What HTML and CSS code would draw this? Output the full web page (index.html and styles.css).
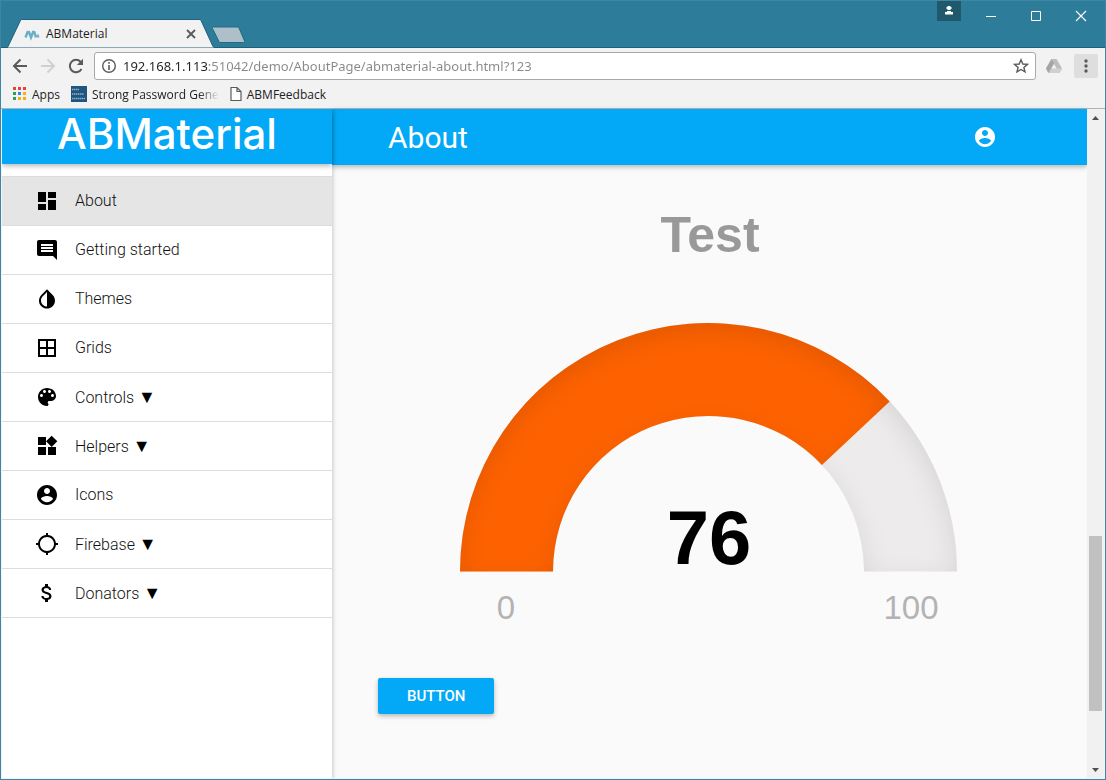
FILE: index.html
```html
<!DOCTYPE html>
<html lang="en">
<head>
<meta charset="utf-8">
<title>ABMaterial</title>
<link rel="stylesheet" href="styles.css">
</head>
<body>
<div class="window">
  <header class="titlebar">
    <div class="tab">
      <svg class="tab-shape" viewBox="0 0 208 30" preserveAspectRatio="none" aria-hidden="true">
        <path d="M0 30 L1 28.500 L13.500 1.500 Q14 .5 15 .5 H192 Q193.500 .5 194 1.500 L206 28.500 L208 30 Z" fill="#f2f2f2" stroke="#1e5f7a"/>
      </svg>
      <svg class="favicon" viewBox="0 0 16 16" aria-hidden="true">
        <path d="M1.500 11.500 L4 5 M4.500 5 L7 11.500 L9.500 5 M10 5 L12 11.500" fill="none" stroke="#69adc6" stroke-width="2.400"/>
        <path d="M13.500 8.500 L14.500 11.500" stroke="#69adc6" stroke-width="2"/>
      </svg>
      <span class="tab-title">ABMaterial</span>
      <button class="tab-close" aria-label="Close tab"><svg width="10" height="10" viewBox="0 0 10 10"><path d="M1 1 L9 9 M9 1 L1 9" stroke="#5a5a5a" stroke-width="1.800"/></svg></button>
    </div>
    <button class="new-tab" aria-label="New tab"><svg width="36" height="18" viewBox="0 0 36 18"><path d="M2.500 1 H26 Q27.500 1 28 2 L33.500 15 Q34 16.500 32.500 16.500 H10 Q8.500 16.500 8 15.500 L1.500 2.500 Q1 1 2.500 1Z" fill="#adc0c9" stroke="#256a84"/></svg></button>
    <div class="controls">
      <button class="profile" aria-label="Profile"><svg width="12" height="12" viewBox="0 0 12 12" fill="#fff"><path d="M4.500 1 H7.500 V2 H8.500 V4 H7.500 V5 H4.500 V4 H3.500 V2 H4.500Z M4 6 H8 V7 H10 V9.500 H2 V7 H4Z"/></svg></button>
      <button class="control" aria-label="Minimize"><svg width="12" height="12" viewBox="0 0 12 12"><path d="M1 6.500 H11" stroke="#fff"/></svg></button>
      <button class="control" aria-label="Maximize"><svg width="12" height="12" viewBox="0 0 12 12"><path d="M1.500 1.500 H10.500 V10.500 H1.500Z" fill="none" stroke="#fff"/></svg></button>
      <button class="control" aria-label="Close"><svg width="12" height="12" viewBox="0 0 12 12"><path d="M1 1 L11 11 M11 1 L1 11" stroke="#fff" stroke-width="1.200"/></svg></button>
    </div>
  </header>

  <div class="toolbar">
    <button class="tool" aria-label="Back"><svg viewBox="0 0 16 16"><path d="M15 8 H2.500 M8.500 1.500 L2 8 L8.500 14.500" fill="none" stroke="#5a5a5a" stroke-width="2"/></svg></button>
    <button class="tool" aria-label="Forward"><svg viewBox="0 0 16 16"><path d="M1 8 H13.500 M7.500 1.500 L14 8 L7.500 14.500" fill="none" stroke="#d0d0d0" stroke-width="2"/></svg></button>
    <button class="tool" aria-label="Reload"><svg viewBox="0 0 16 16"><path d="M13.500 11 A6.200 6.200 0 1 1 12.700 3.900" fill="none" stroke="#5a5a5a" stroke-width="2"/><path d="M15 .8 V7 H8.800Z" fill="#5a5a5a"/></svg></button>
    <div class="omnibox">
      <svg width="16" height="16" viewBox="0 0 16 16" aria-hidden="true"><circle cx="8" cy="8" r="6.300" fill="none" stroke="#5a5a5a" stroke-width="1.400"/><path d="M8 7 V12 M8 4 V5.700" stroke="#5a5a5a" stroke-width="1.600"/></svg>
      <input class="url" type="text" aria-label="Address" value="192.168.1.113:51042/demo/AboutPage/abmaterial-about.html?123">
      <button class="star" aria-label="Bookmark this page"><svg width="16" height="16" viewBox="0 0 16 16"><path d="M8 1.800 L9.800 6 L14.400 6.400 L10.900 9.400 L12 13.900 L8 11.500 L4 13.900 L5.100 9.400 L1.600 6.400 L6.200 6Z" fill="none" stroke="#5a5a5a" stroke-width="1.400"/></svg></button>
    </div>
    <button class="drive" aria-label="Drive"><svg width="16" height="16" viewBox="0 0 16 16"><path d="M5.500 1 H10.500 L16 10.500 L13.500 15 H2.500 L0 10.500Z" fill="#bdbdbd"/><path d="M5.500 1 L8 5.500 L2.500 15 L0 10.500Z" fill="#a5a5a5"/><path d="M5.300 10.500 H16 L13.500 15 H2.500Z" fill="#d0d0d0"/><path d="M8 6 L10.700 10.500 H5.300Z" fill="#f2f2f2"/></svg></button>
    <button class="more" aria-label="Menu"><svg width="16" height="16" viewBox="0 0 16 16" fill="#5a5a5a"><circle cx="8" cy="3" r="1.700"/><circle cx="8" cy="8" r="1.700"/><circle cx="8" cy="13" r="1.700"/></svg></button>
  </div>

  <nav class="bookmarks" aria-label="Bookmarks">
    <a class="bookmark" href="#apps"><svg width="14" height="14" viewBox="0 0 14 14"><path d="M0 0h3v3H0zM5 0h3v3H5zM10 0h3v3h-3z" fill="#ea4335"/><path d="M0 5h3v3H0z" fill="#2ca05a"/><path d="M5 5h3v3H5z" fill="#2b8af0"/><path d="M10 5h3v3h-3z" fill="#f9b10a"/><path d="M0 10h3v3H0z" fill="#2ca05a"/><path d="M5 10h3v3H5zM10 10h3v3h-3z" fill="#f9b10a"/></svg><span>Apps</span></a>
    <a class="bookmark" href="#password"><svg width="16" height="16" viewBox="0 0 16 16"><path d="M0 0h16v16H0z" fill="#1f557e"/><path d="M1 3.500h7M1 8h12M1 12.500h13" stroke="#8fb0c8" stroke-width="1.500" stroke-dasharray="1.500 .5"/></svg><span class="faded">Strong Password Gene</span></a>
    <a class="bookmark" href="#feedback"><svg width="12" height="16" viewBox="0 0 12 16"><path d="M1 1.500 H7 L11 5.500 V14.500 H1Z M7 1.500 V5.500 H11" fill="#fff" stroke="#5a5a5a" stroke-width="1.200"/></svg><span>ABMFeedback</span></a>
  </nav>

  <div class="page">
    <aside class="sidebar">
      <div class="brand">ABMaterial</div>
      <ul class="menu">
        <li><a class="item active" href="#about"><svg viewBox="0 0 24 24"><path d="M3 13h8V3H3v10zm0 8h8v-6H3v6zm10 0h8V11h-8v10zm0-18v6h8V3h-8z"/></svg>About</a></li>
        <li><a class="item" href="#start"><svg viewBox="0 0 24 24"><path d="M21.990 4c0-1.100-.89-2-1.990-2H4c-1.100 0-2 .9-2 2v12c0 1.100.9 2 2 2h14l4 4-.01-18zM18 14H6v-2h12v2zm0-3H6V9h12v2zm0-3H6V6h12v2z"/></svg>Getting started</a></li>
        <li><a class="item" href="#themes"><svg viewBox="0 0 24 24"><path d="M17.660 7.930L12 2.270 6.340 7.930c-3.120 3.120-3.120 8.190 0 11.310C7.900 20.800 9.950 21.580 12 21.580c2.050 0 4.100-.78 5.660-2.340 3.120-3.120 3.120-8.190 0-11.310zM12 19.590c-1.600 0-3.110-.62-4.240-1.760C6.620 16.690 6 15.190 6 13.590s.62-3.110 1.760-4.240L12 5.100v14.490z"/></svg>Themes</a></li>
        <li><a class="item" href="#grids"><svg viewBox="0 0 24 24"><path d="M3 3v18h18V3H3zm8 16H5v-6h6v6zm0-8H5V5h6v6zm8 8h-6v-6h6v6zm0-8h-6V5h6v6z"/></svg>Grids</a></li>
        <li><a class="item" href="#controls"><svg viewBox="0 0 24 24"><path d="M12 3c-4.970 0-9 4.030-9 9s4.030 9 9 9c.83 0 1.500-.67 1.500-1.500 0-.39-.15-.74-.39-1.010-.23-.26-.38-.61-.38-.99 0-.83.67-1.500 1.500-1.500H16c2.760 0 5-2.240 5-5 0-4.420-4.030-8-9-8zm-5.500 9c-.83 0-1.500-.67-1.500-1.500S5.670 9 6.500 9 8 9.670 8 10.500 7.330 12 6.500 12zm3-4C8.670 8 8 7.330 8 6.500S8.670 5 9.500 5s1.500.67 1.500 1.500S10.330 8 9.500 8zm5 0c-.83 0-1.500-.67-1.500-1.500S13.670 5 14.500 5s1.500.67 1.500 1.500S15.330 8 14.500 8zm3 4c-.83 0-1.500-.67-1.500-1.500S16.670 9 17.500 9s1.500.67 1.500 1.500-.67 1.500-1.500 1.500z"/></svg><span>Controls <span class="caret">▼</span></span></a></li>
        <li><a class="item" href="#helpers"><svg viewBox="0 0 24 24"><path d="M13 13v8h8v-8h-8zM3 21h8v-8H3v8zM3 3v8h8V3H3zm13.660-1.310L11 7.340 16.660 13l5.660-5.660-5.660-5.650z"/></svg><span>Helpers <span class="caret">▼</span></span></a></li>
        <li><a class="item" href="#icons"><svg viewBox="0 0 24 24"><path d="M12 2C6.480 2 2 6.480 2 12s4.480 10 10 10 10-4.480 10-10S17.520 2 12 2zm0 3c1.660 0 3 1.340 3 3s-1.340 3-3 3-3-1.340-3-3 1.340-3 3-3zm0 14.200c-2.500 0-4.710-1.280-6-3.220.03-1.990 4-3.080 6-3.080 1.990 0 5.970 1.090 6 3.080-1.290 1.940-3.500 3.220-6 3.220z"/></svg>Icons</a></li>
        <li><a class="item" href="#firebase"><svg viewBox="0 0 24 24"><path d="M20.940 11c-.46-4.170-3.770-7.480-7.940-7.940V1h-2v2.060C6.830 3.520 3.520 6.830 3.060 11H1v2h2.060c.46 4.170 3.770 7.480 7.940 7.940V23h2v-2.060c4.170-.46 7.480-3.770 7.940-7.940H23v-2h-2.060zM12 19c-3.870 0-7-3.130-7-7s3.130-7 7-7 7 3.130 7 7-3.130 7-7 7z"/></svg><span>Firebase <span class="caret">▼</span></span></a></li>
        <li><a class="item" href="#donators"><svg viewBox="0 0 24 24"><path d="M11.800 10.900c-2.270-.59-3-1.200-3-2.150 0-1.090 1.010-1.850 2.700-1.850 1.780 0 2.440.85 2.500 2.100h2.210c-.07-1.720-1.120-3.300-3.210-3.810V3h-3v2.160c-1.940.42-3.500 1.680-3.500 3.610 0 2.310 1.910 3.460 4.700 4.130 2.500.6 3 1.480 3 2.410 0 .69-.49 1.790-2.700 1.790-2.060 0-2.870-.92-2.980-2.100h-2.200c.12 2.190 1.760 3.420 3.680 3.830V21h3v-2.150c1.950-.37 3.500-1.500 3.500-3.550 0-2.840-2.430-3.810-4.700-4.400z"/></svg><span>Donators <span class="caret">▼</span></span></a></li>
      </ul>
    </aside>

    <main class="main">
      <div class="navbar">
        <h1>About</h1>
        <button class="account" aria-label="Account"><svg width="24" height="24" viewBox="0 0 24 24" fill="#fff"><path d="M12 2C6.480 2 2 6.480 2 12s4.480 10 10 10 10-4.480 10-10S17.520 2 12 2zm0 3c1.660 0 3 1.340 3 3s-1.340 3-3 3-3-1.340-3-3 1.340-3 3-3zm0 14.200c-2.500 0-4.710-1.280-6-3.220.03-1.990 4-3.080 6-3.080 1.990 0 5.970 1.090 6 3.080-1.290 1.940-3.500 3.220-6 3.220z"/></svg></button>
      </div>
      <div class="content">
        <svg class="gauge" viewBox="0 0 664 493" role="img" aria-label="Test gauge, 76 of 100">
          <defs>
            <filter id="inner-shadow" x="-10%" y="-10%" width="120%" height="120%" color-interpolation-filters="sRGB">
              <feOffset dx="0" dy="8"/>
              <feGaussianBlur result="blurred" stdDeviation="13"/>
              <feComposite operator="out" in="SourceGraphic" in2="blurred" result="inverse"/>
              <feFlood flood-color="#000" flood-opacity=".1" result="color"/>
              <feComposite operator="in" in="color" in2="inverse" result="shadow"/>
              <feComposite operator="over" in="shadow" in2="SourceGraphic"/>
            </filter>
          </defs>
          <path d="M82 386.500 A248.500 248.500 0 0 1 579 386.500 H486 A155.500 155.500 0 0 0 175 386.500Z" fill="#edebeb" filter="url(#inner-shadow)"/>
          <path d="M82 386.500 A248.500 248.500 0 0 1 511.600 216.400 L443.900 280 A155.500 155.500 0 0 0 175 386.500Z" fill="#fe6200" filter="url(#inner-shadow)"/>
          <text class="gauge-title" x="332" y="67">Test</text>
          <text class="gauge-value" x="331" y="379">76</text>
          <text class="gauge-limit" x="128" y="434">0</text>
          <text class="gauge-limit" x="533" y="434">100</text>
        </svg>
        <button class="action">BUTTON</button>
      </div>
    </main>

    <div class="scrollbar">
      <button class="scroll-arrow" aria-label="Scroll up"><svg width="7" height="4" viewBox="0 0 7 4"><path d="M0 4 L3.500 0 L7 4Z" fill="#505050"/></svg></button>
      <div class="scroll-track"><div class="scroll-before"></div><div class="scroll-thumb"></div><div class="scroll-after"></div></div>
      <button class="scroll-arrow" aria-label="Scroll down"><svg width="7" height="4" viewBox="0 0 7 4"><path d="M0 0 L3.500 4 L7 0Z" fill="#505050"/></svg></button>
    </div>
  </div>
</div>
</body>
</html>
```
FILE: styles.css
```css
* { box-sizing: border-box; }

body {
  margin: 0;
  font-family: "Open Sans", "Noto Sans", sans-serif;
  font-size: 12px;
  color: #222;
}

button {
  display: flex;
  align-items: center;
  justify-content: center;
  padding: 0;
  border: 0;
  background: none;
  font: inherit;
}

a { color: inherit; text-decoration: none; }

svg { display: block; flex: none; }

.window {
  display: flex;
  flex-direction: column;
  min-height: 100vh;
  border: 1px solid #3d86a5;
  background: #f2f2f2;
}

/* Title bar */
.titlebar {
  display: flex;
  align-items: flex-end;
  height: 47px;
  padding-left: 6px;
  background: #2d7c9a;
  box-shadow: inset 0 -1px #1e5f7a;
}

.tab {
  position: relative;
  display: flex;
  align-items: center;
  width: 208px;
  height: 29px;
  padding: 0 16px 0 17px;
}

.tab-shape {
  position: absolute;
  inset: 0;
  width: 100%;
  height: 100%;
}

.favicon { position: relative; width: 16px; height: 16px; }

.tab-title { position: relative; flex: 1; padding-left: 6px; color: #222; font-size: 12px; }

.tab-close { position: relative; width: 16px; height: 16px; }

.new-tab { align-self: flex-end; margin-bottom: 4px; margin-left: -4px; }

.controls {
  display: flex;
  align-items: flex-start;
  align-self: flex-start;
  margin-left: auto;
  padding-right: 2px;
}

.profile { width: 24px; height: 20px; margin-right: 7px; background: #20586c; }

.control { width: 45px; height: 29px; }

/* Toolbar */
.toolbar {
  display: flex;
  align-items: center;
  gap: 8px;
  height: 36px;
  padding: 0 7px 0 9px;
}

.tool { width: 20px; height: 20px; }

.tool svg { width: 16px; height: 16px; }

.omnibox {
  display: flex;
  flex: 1;
  align-items: center;
  gap: 4px;
  height: 28px;
  padding: 0 6px;
  border: 1px solid #a9a9a9;
  border-radius: 3px;
  background: #fff;
}

.url {
  flex: 1;
  min-width: 0;
  padding: 0 2px;
  border: 0;
  background: linear-gradient(90deg, #222 86px, #888 86px) text;
  color: transparent;
  font-family: "Noto Sans", "Open Sans", sans-serif;
  font-size: 13px;
}

.drive { margin-left: 2px; width: 16px; height: 16px; }

.more {
  width: 24px;
  height: 24px;
  margin-left: 4px;
  border-radius: 2px;
  background: #dedede;
}

/* Bookmarks */
.bookmarks {
  display: flex;
  align-items: center;
  gap: 11px;
  height: 24px;
  padding: 0 12px 4px;
  box-shadow: 0 1px #b2b2b2;
}

.bookmark { display: flex; align-items: center; gap: 5px; white-space: nowrap; }

.faded {
  -webkit-mask-image: linear-gradient(90deg, #000 84%, transparent);
  mask-image: linear-gradient(90deg, #000 84%, transparent);
}

/* Page */
.page {
  display: flex;
  flex: 1;
  margin: 1px;
  font-family: Roboto, sans-serif;
}

.sidebar {
  position: relative;
  width: 330px;
  background: #fff;
  box-shadow: 0 2px 5px rgba(0, 0, 0, .28);
  clip-path: inset(0 -10px 0 0);
}

.brand {
  height: 55px;
  background: #03a9f7;
  box-shadow: 0 2px 5px rgba(0, 0, 0, .28);
  color: #fff;
  font-family: Inter, sans-serif;
  font-size: 42px;
  font-weight: 500;
  line-height: 50px;
  text-align: center;
}

.menu {
  margin: 12px 0 0;
  padding: 0;
  border-top: 1px solid #ddd;
  list-style: none;
}

.item {
  display: flex;
  align-items: center;
  gap: 16px;
  height: 49px;
  padding-left: 33px;
  border-bottom: 1px solid #ddd;
  color: #111;
  font-size: 16px;
  font-weight: 300;
  line-height: 20px;
}

.item.active { background: #e5e5e5; }

.item svg { width: 24px; height: 24px; fill: #000; }

.caret { color: #000; font-family: "DejaVu Sans", sans-serif; font-size: 18px; }

.main { flex: 1; min-width: 0; background: #fafafa; }

.navbar {
  display: flex;
  align-items: center;
  justify-content: space-between;
  height: 56px;
  padding: 0 90px 0 56px;
  background: #03a9f7;
  box-shadow: 0 2px 5px rgba(0, 0, 0, .28);
  color: #fff;
}

.navbar h1 { margin: 0; font-size: 30px; font-weight: 400; }

.content { padding: 20px 45px 0 46px; }

.gauge { width: 100%; height: auto; }

.gauge text { font-family: "Liberation Sans", Arial, sans-serif; text-anchor: middle; }

.gauge-title { fill: #999; font-size: 50px; font-weight: bold; }

.gauge-value { fill: #000; font-size: 76px; font-weight: bold; }

.gauge-limit { fill: #b3b3b3; font-size: 33px; }

.action {
  height: 36px;
  padding: 0 29px;
  border-radius: 2px;
  background: #03a9f7;
  box-shadow: 0 2px 5px rgba(0, 0, 0, .28);
  color: #fff;
  font-size: 15px;
  font-weight: 500;
}

/* Scrollbar */
.scrollbar {
  display: flex;
  flex-direction: column;
  width: 17px;
  background: #f1f1f1;
}

.scroll-arrow { width: 17px; height: 17px; }

.scroll-track { display: flex; flex: 1; flex-direction: column; padding: 0 2px; }

.scroll-before { flex: 410; }

.scroll-thumb { flex: 175; background: #c1c1c1; }

.scroll-after { flex: 50; }
```
